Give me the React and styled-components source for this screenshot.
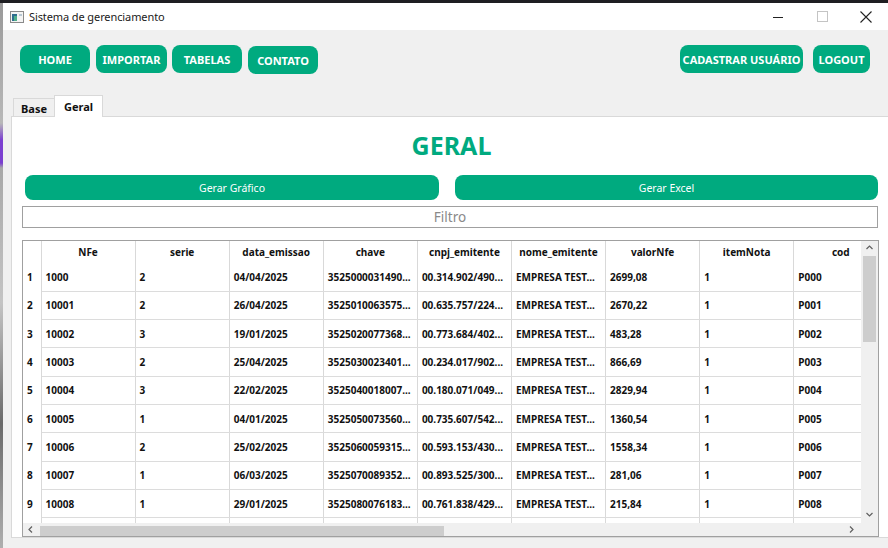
import React from 'react';
import styled, { createGlobalStyle } from 'styled-components';

const GREEN = '#00aa7f';

const GlobalStyle = createGlobalStyle`
  html, body {
    margin: 0;
    padding: 0;
    background: #1e1e22;
    overflow: hidden;
  }
  body {
    font-family: "Noto Sans", "Open Sans", sans-serif;
  }
`;

const Desktop = styled.div`
  display: flex;
  width: 888px;
  height: 548px;
  padding-top: 3px;
  box-sizing: border-box;
  overflow: hidden;
`;

const EdgeStrip = styled.div`
  width: 3px;
  flex: none;
  background: linear-gradient(
    to bottom,
    #9a9a9a 0px, #b8b8b8 120px, #7b3fd0 137px, #7b3fd0 160px,
    #a8a8a8 165px, #c4c4c4 300px, #6a6a6a 420px, #b0b0b0 548px
  );
`;

const Window = styled.div`
  flex: 1;
  display: flex;
  flex-direction: column;
  background: #f0f0f0;
  min-width: 0;
`;

const TitleBar = styled.div`
  height: 27px;
  flex: none;
  background: #ffffff;
  display: flex;
  align-items: center;
  padding-left: 7px;
  font-size: 11px;
  letter-spacing: -0.1px;
  color: #1a1a1a;
`;

const TitleText = styled.span`
  margin-left: 5px;
  flex: 1;
`;

const WinControl = styled.div`
  width: 44px;
  height: 27px;
  display: flex;
  align-items: center;
  justify-content: center;
`;

const Nav = styled.div`
  display: flex;
  align-items: flex-start;
  gap: 6px;
  padding: 15px 18px 0 17px;
`;

const Spacer = styled.div`
  flex: 1;
`;

const NavButton = styled.button`
  width: ${p => p.$w}px;
  height: 28px;
  margin-top: ${p => p.$dy || 0}px;
  margin-left: ${p => p.$ml || 0}px;
  padding: 0;
  border: none;
  border-radius: 8px;
  background: ${GREEN};
  color: #ffffff;
  font-family: inherit;
  font-size: 11px;
  font-weight: 700;
  white-space: nowrap;
`;

const TabBar = styled.div`
  display: flex;
  align-items: flex-end;
  margin: 21px 0 0 10px;
  height: 22px;
  position: relative;
  z-index: 1;
`;

const Tab = styled.div`
  width: ${p => p.$w}px;
  height: ${p => (p.$active ? 22 : 19)}px;
  box-sizing: border-box;
  display: flex;
  align-items: center;
  justify-content: center;
  font-size: 11px;
  font-weight: 700;
  color: #111;
  background: ${p => (p.$active ? '#ffffff' : '#f0f0f0')};
  border: 1px solid #d9d9d9;
  border-bottom: ${p => (p.$active ? 'none' : '1px solid #d9d9d9')};
  margin-left: ${p => (p.$active ? -1 : 0)}px;
  padding-top: ${p => (p.$active ? 0 : 1)}px;
`;

const Pane = styled.div`
  flex: 1;
  margin: -1px -8px 10px 8px;
  background: #ffffff;
  border: 1px solid #d9d9d9;
  display: flex;
  flex-direction: column;
  min-height: 0;
`;

const Heading = styled.h1`
  margin: 10px 0 0;
  height: 36px;
  line-height: 36px;
  text-align: center;
  font-size: 25px;
  font-weight: 700;
  color: ${GREEN};
  padding-right: 4px;
`;

const ActionRow = styled.div`
  display: grid;
  grid-template-columns: 414px 423px;
  gap: 16px;
  margin: 12px 0 0 13px;
`;

const ActionButton = styled.button`
  height: 25px;
  border: none;
  border-radius: 8px;
  background: ${GREEN};
  color: #ffffff;
  font-family: inherit;
  font-size: 10.5px;
  padding: 0;
`;

const Filter = styled.input`
  width: 856px;
  height: 22px;
  box-sizing: border-box;
  margin: 6px 0 0 10px;
  border: 1px solid #a0a0a0;
  background: #fff;
  text-align: center;
  font-family: inherit;
  font-size: 13.5px;
  outline: none;
  &::placeholder {
    color: #8a8a8a;
  }
`;

const TableFrame = styled.div`
  width: 857px;
  height: 297px;
  box-sizing: border-box;
  margin: 12px 0 0 10px;
  border: 1px solid #a0a0a0;
  display: grid;
  grid-template-columns: 1fr 17px;
  grid-template-rows: 1fr 13px;
`;

const Viewport = styled.div`
  overflow: hidden;
  min-width: 0;
  min-height: 0;
`;

const Grid = styled.table`
  border-collapse: collapse;
  table-layout: fixed;
  width: 865px;
  font-size: 10px;
  font-weight: 700;
  color: #111;
`;

const HeadCell = styled.th`
  height: 22px;
  padding: 0;
  text-align: center;
  font-weight: 700;
  border-right: 1px solid #d9d9d9;
  white-space: nowrap;
  overflow: hidden;
`;

const RowHead = styled.td`
  padding: 0 0 0 4px;
  border-right: 1px solid #d9d9d9;
`;

const Cell = styled.td`
  height: 28.33px;
  box-sizing: border-box;
  padding: 0 0 0 4px;
  border-right: 1px solid #d9d9d9;
  border-bottom: 1px solid #dcdcdc;
  white-space: nowrap;
  overflow: hidden;
`;

const VScroll = styled.div`
  background: #f0f0f0;
  display: flex;
  flex-direction: column;
  align-items: center;
`;

const ScrollArrow = styled.div`
  height: ${p => p.$h || 16}px;
  width: 17px;
  display: flex;
  align-items: center;
  justify-content: center;
  flex: none;
`;

const VThumb = styled.div`
  width: 13px;
  height: 86px;
  background: #cdcdcd;
  flex: none;
`;

const HScroll = styled.div`
  background: #f0f0f0;
  display: flex;
  align-items: center;
`;

const HThumb = styled.div`
  width: 404px;
  height: 10px;
  background: #cdcdcd;
  margin-top: 2px;
`;

const Corner = styled.div`
  background: #f0f0f0;
`;

const Chevron = ({ dir }) => {
  const paths = {
    up: 'M1.5 5 L4.5 2 L7.5 5',
    down: 'M1.5 2 L4.5 5 L7.5 2',
    left: 'M5 1.5 L2 4.5 L5 7.5',
    right: 'M2 1.5 L5 4.5 L2 7.5',
  };
  return (
    <svg width="9" height="9" viewBox="0 0 9 9">
      <path d={paths[dir]} fill="none" stroke="#606060" strokeWidth="1.2" />
    </svg>
  );
};

const columns = ['NFe', 'serie', 'data_emissao', 'chave', 'cnpj_emitente', 'nome_emitente', 'valorNfe', 'itemNota', 'cod'];

const rows = [
  ['1000', '2', '04/04/2025', '3525000031490...', '00.314.902/490...', 'EMPRESA TEST...', '2699,08', '1', 'P000'],
  ['10001', '2', '26/04/2025', '3525010063575...', '00.635.757/224...', 'EMPRESA TEST...', '2670,22', '1', 'P001'],
  ['10002', '3', '19/01/2025', '3525020077368...', '00.773.684/402...', 'EMPRESA TEST...', '483,28', '1', 'P002'],
  ['10003', '2', '25/04/2025', '3525030023401...', '00.234.017/902...', 'EMPRESA TEST...', '866,69', '1', 'P003'],
  ['10004', '3', '22/02/2025', '3525040018007...', '00.180.071/049...', 'EMPRESA TEST...', '2829,94', '1', 'P004'],
  ['10005', '1', '04/01/2025', '3525050073560...', '00.735.607/542...', 'EMPRESA TEST...', '1360,54', '1', 'P005'],
  ['10006', '2', '25/02/2025', '3525060059315...', '00.593.153/430...', 'EMPRESA TEST...', '1558,34', '1', 'P006'],
  ['10007', '1', '06/03/2025', '3525070089352...', '00.893.525/300...', 'EMPRESA TEST...', '281,06', '1', 'P007'],
  ['10008', '1', '29/01/2025', '3525080076183...', '00.761.838/429...', 'EMPRESA TEST...', '215,84', '1', 'P008'],
  ['', '', '', '', '', '', '', '', ''],
];

export default function App() {
  return (
    <>
      <GlobalStyle />
      <Desktop>
        <EdgeStrip />
        <Window>
          <TitleBar>
            <svg width="14" height="12" viewBox="0 0 14 12">
              <rect x="0.5" y="0.5" width="13" height="11" fill="#f4f4f4" stroke="#8a8a8a" />
              <rect x="2" y="3" width="5" height="7" fill="#2f6e8e" />
              <rect x="4" y="5" width="3" height="5" fill="#4fae8a" />
              <rect x="9" y="3" width="3" height="2" fill="#b8c8d4" />
            </svg>
            <TitleText>Sistema de gerenciamento</TitleText>
            <WinControl>
              <svg width="10" height="10" viewBox="0 0 10 10">
                <path d="M0 5.5 H10" stroke="#222" strokeWidth="1" />
              </svg>
            </WinControl>
            <WinControl>
              <svg width="11" height="11" viewBox="0 0 11 11">
                <rect x="0.5" y="0.5" width="10" height="10" fill="none" stroke="#c4c4c4" />
              </svg>
            </WinControl>
            <WinControl>
              <svg width="12" height="12" viewBox="0 0 12 12">
                <path d="M0.5 0.5 L11.5 11.5 M11.5 0.5 L0.5 11.5" stroke="#222" strokeWidth="1.1" />
              </svg>
            </WinControl>
          </TitleBar>

          <Nav>
            <NavButton $w={70}>HOME</NavButton>
            <NavButton $w={71}>IMPORTAR</NavButton>
            <NavButton $w={70} $ml={-1}>TABELAS</NavButton>
            <NavButton $w={70} $dy={1}>CONTATO</NavButton>
            <Spacer />
            <NavButton $w={123}>CADASTRAR USUÁRIO</NavButton>
            <NavButton $w={57} $ml={4}>LOGOUT</NavButton>
          </Nav>

          <TabBar>
            <Tab $w={42}>Base</Tab>
            <Tab $w={49} $active>Geral</Tab>
          </TabBar>

          <Pane>
            <Heading>GERAL</Heading>
            <ActionRow>
              <ActionButton>Gerar Gráfico</ActionButton>
              <ActionButton>Gerar Excel</ActionButton>
            </ActionRow>
            <Filter placeholder="Filtro" />
            <TableFrame>
              <Viewport>
                <Grid>
                  <colgroup>
                    <col style={{ width: 18 }} />
                    {columns.map(c => (
                      <col key={c} style={{ width: 94.1 }} />
                    ))}
                  </colgroup>
                  <thead>
                    <tr>
                      <HeadCell />
                      {columns.map(c => (
                        <HeadCell key={c}>{c}</HeadCell>
                      ))}
                    </tr>
                  </thead>
                  <tbody>
                    {rows.map((r, i) => (
                      <tr key={i}>
                        <RowHead>{i < 9 ? i + 1 : ''}</RowHead>
                        {r.map((v, j) => (
                          <Cell key={j}>{v}</Cell>
                        ))}
                      </tr>
                    ))}
                  </tbody>
                </Grid>
              </Viewport>
              <VScroll>
                <ScrollArrow $h={15}><Chevron dir="up" /></ScrollArrow>
                <VThumb />
                <Spacer />
                <ScrollArrow $h={16}><Chevron dir="down" /></ScrollArrow>
              </VScroll>
              <HScroll>
                <ScrollArrow $h={13}><Chevron dir="left" /></ScrollArrow>
                <HThumb />
                <Spacer />
                <ScrollArrow $h={13}><Chevron dir="right" /></ScrollArrow>
              </HScroll>
              <Corner />
            </TableFrame>
          </Pane>
        </Window>
      </Desktop>
    </>
  );
}
